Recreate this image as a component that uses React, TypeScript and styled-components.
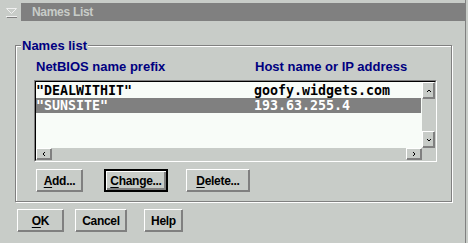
import styled, { createGlobalStyle } from "styled-components";

const colors = {
  face: "#c8ccc8",
  shadow: "#808080",
  light: "#ffffff",
  navy: "#000080",
  listBg: "#f8fcf8",
};

const GlobalStyle = createGlobalStyle`
  html, body {
    margin: 0;
    padding: 0;
    background: ${colors.face};
  }
  body {
    font-family: "Liberation Sans", Arial, sans-serif;
  }
`;

const Window = styled.div`
  width: 466px;
  height: 243px;
  box-sizing: border-box;
  border-right: 1px solid ${colors.shadow};
  padding-top: 3px;
  display: flex;
  flex-direction: column;
  background: ${colors.face};
  overflow: hidden;
`;

const TitleRow = styled.div`
  display: flex;
  height: 18px;
`;

const SysMenu = styled.div`
  width: 21px;
  display: flex;
  align-items: center;
  justify-content: flex-start;
  padding-left: 6px;
  box-sizing: border-box;
`;

const TitleBar = styled.div`
  flex: 1;
  background: ${colors.shadow};
  color: ${colors.face};
  font-weight: bold;
  font-size: 12px;
  letter-spacing: -0.3px;
  display: flex;
  align-items: center;
  padding-left: 11px;
`;

const Group = styled.fieldset`
  margin: 18px 0 0 15px;
  width: 437px;
  box-sizing: border-box;
  padding: 0;
  border: 1px solid ${colors.shadow};
  box-shadow: 1px 1px 0 ${colors.light}, inset 1px 1px 0 ${colors.light};
  min-width: 0;
`;

const Legend = styled.legend`
  margin-left: 5px;
  padding: 0 1px;
  background: ${colors.face};
  color: ${colors.navy};
  font-weight: bold;
  font-size: 13px;
  line-height: 13px;
`;

const GroupBody = styled.div`
  padding: 7px 0 9px 18px;
  display: flex;
  flex-direction: column;
`;

const Headers = styled.div`
  display: flex;
  height: 15px;
  line-height: 15px;
  margin-bottom: 6px;
  color: ${colors.navy};
  font-weight: bold;
  font-size: 13px;
`;

const HeaderCell = styled.div<{ $w?: number; $pl?: number }>`
  width: ${(p) => (p.$w ? `${p.$w}px` : "auto")};
  padding-left: ${(p) => p.$pl ?? 0}px;
  box-sizing: border-box;
  white-space: nowrap;
`;

const ListFrame = styled.div`
  width: 403px;
  box-sizing: border-box;
  border: 1px solid;
  border-color: ${colors.shadow} ${colors.light} ${colors.light} ${colors.shadow};
`;

const ListInner = styled.div`
  border: 1px solid;
  border-color: #000 ${colors.face} ${colors.face} #000;
  display: grid;
  grid-template-columns: 1fr 13px;
  grid-template-rows: 66px 12px;
`;

const ListArea = styled.div`
  background: ${colors.listBg};
  padding-top: 1px;
  overflow: hidden;
`;

const Row = styled.div<{ $selected?: boolean }>`
  display: flex;
  height: 15px;
  line-height: 15px;
  margin-right: 1px;
  background: ${(p) => (p.$selected ? colors.shadow : "transparent")};
  color: ${(p) => (p.$selected ? colors.light : "#000")};
  font-family: "DejaVu Sans Mono", "Liberation Mono", monospace;
  font-weight: bold;
  font-size: 13.3px;
  white-space: pre;
`;

const Cell = styled.div<{ $w?: number }>`
  width: ${(p) => (p.$w ? `${p.$w}px` : "auto")};
`;

const VScroll = styled.div`
  background: ${colors.face};
  display: flex;
  flex-direction: column;
  justify-content: space-between;
`;

const HScroll = styled.div`
  background: ${colors.face};
  display: flex;
  justify-content: space-between;
`;

const Corner = styled.div`
  background: ${colors.face};
`;

const ScrollBtn = styled.div<{ $w: number; $h: number }>`
  width: ${(p) => p.$w}px;
  height: ${(p) => p.$h}px;
  box-sizing: border-box;
  border: 1px solid;
  border-color: ${colors.light} ${colors.shadow} ${colors.shadow} ${colors.light};
  box-shadow: inset -1px -1px 0 ${colors.shadow};
  background: ${colors.face};
  display: flex;
  align-items: center;
  justify-content: center;
`;

const ButtonRow = styled.div<{ $pl: number; $mt: number }>`
  display: flex;
  padding-left: ${(p) => p.$pl}px;
  margin-top: ${(p) => p.$mt}px;
`;

const Button = styled.button<{ $w: number; $ml?: number; $default?: boolean }>`
  width: ${(p) => p.$w}px;
  height: 23px;
  margin-left: ${(p) => p.$ml ?? 0}px;
  box-sizing: border-box;
  padding: 0;
  background: ${colors.face};
  font-family: "Liberation Sans", Arial, sans-serif;
  font-weight: bold;
  font-size: 12px;
  letter-spacing: -0.3px;
  color: #000;
  border: ${(p) => (p.$default ? "2px solid #000" : "1px solid")};
  border-color: ${(p) =>
    p.$default
      ? "#000"
      : `${colors.light} ${colors.shadow} ${colors.shadow} ${colors.light}`};
  box-shadow: ${(p) =>
    p.$default
      ? `inset 1px 1px 0 ${colors.light}, inset -2px -2px 0 ${colors.shadow}`
      : `inset -1px -1px 0 ${colors.shadow}`};
  display: flex;
  align-items: center;
  justify-content: center;

  u {
    text-decoration-thickness: 1px;
    text-underline-offset: 2px;
  }
`;

function Arrow({ dir }: { dir: "up" | "down" | "left" | "right" }) {
  const pts = {
    up: "1,4 3,2 5,4",
    down: "1,2 3,4 5,2",
    left: "4,1 2,3 4,5",
    right: "2,1 4,3 2,5",
  }[dir];
  return (
    <svg width="6" height="6" viewBox="0 0 6 6">
      <polyline points={pts} fill="none" stroke="#000" strokeWidth="1" />
    </svg>
  );
}

const rows = [
  { name: '"DEALWITHIT"', host: "goofy.widgets.com" },
  { name: '"SUNSITE"', host: "193.63.255.4", selected: true },
];

export default function App() {
  return (
    <>
      <GlobalStyle />
      <Window>
        <TitleRow>
          <SysMenu>
            <svg width="11" height="11" viewBox="0 0 11 11">
              <polygon points="0.5,1.5 10.5,1.5 5.5,6.5" fill="none" stroke="#f0f0f0" />
              <rect x="0" y="9" width="11" height="1" fill="#f0f0f0" />
              <rect x="1" y="10" width="10" height="1" fill="#808080" />
            </svg>
          </SysMenu>
          <TitleBar>Names List</TitleBar>
        </TitleRow>

        <Group>
          <Legend>Names list</Legend>
          <GroupBody>
            <Headers>
              <HeaderCell $w={221} $pl={2}>NetBIOS name prefix</HeaderCell>
              <HeaderCell>Host name or IP address</HeaderCell>
            </Headers>
            <ListFrame>
              <ListInner>
                <ListArea>
                  {rows.map((r) => (
                    <Row key={r.name} $selected={r.selected}>
                      <Cell $w={218}>{r.name}</Cell>
                      <Cell>{r.host}</Cell>
                    </Row>
                  ))}
                </ListArea>
                <VScroll>
                  <ScrollBtn $w={13} $h={17}>
                    <Arrow dir="up" />
                  </ScrollBtn>
                  <ScrollBtn $w={13} $h={17}>
                    <Arrow dir="down" />
                  </ScrollBtn>
                </VScroll>
                <HScroll>
                  <ScrollBtn $w={16} $h={12}>
                    <Arrow dir="left" />
                  </ScrollBtn>
                  <ScrollBtn $w={16} $h={12}>
                    <Arrow dir="right" />
                  </ScrollBtn>
                </HScroll>
                <Corner />
              </ListInner>
            </ListFrame>
            <ButtonRow $pl={2} $mt={7}>
              <Button $w={47}>
                <span>
                  <u>A</u>dd...
                </span>
              </Button>
              <Button $w={64} $ml={21} $default>
                <span>
                  <u>C</u>hange...
                </span>
              </Button>
              <Button $w={64} $ml={18}>
                <span>
                  <u>D</u>elete...
                </span>
              </Button>
            </ButtonRow>
          </GroupBody>
        </Group>

        <ButtonRow $pl={17} $mt={7}>
          <Button $w={47}>
            <span>
              <u>O</u>K
            </span>
          </Button>
          <Button $w={52} $ml={11}>Cancel</Button>
          <Button $w={39} $ml={17}>Help</Button>
        </ButtonRow>
      </Window>
    </>
  );
}
